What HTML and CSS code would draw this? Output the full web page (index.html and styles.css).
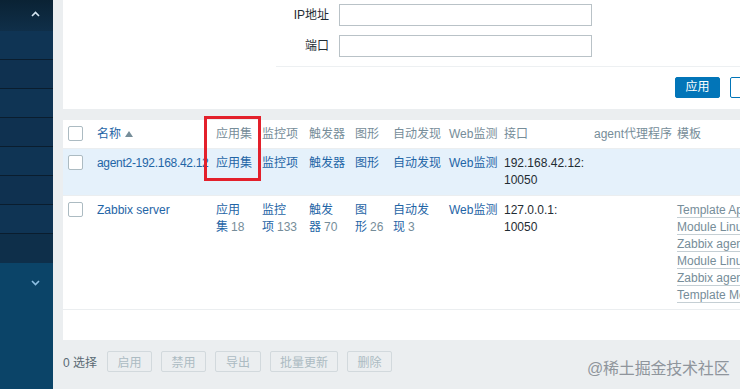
FILE: index.html
```html
<!DOCTYPE html>
<html lang="zh-CN">
<head>
<meta charset="utf-8">
<title>主机</title>
<link rel="stylesheet" href="styles.css">
</head>
<body>
<div class="app">
  <nav class="side">
    <div class="side-top">
      <svg class="chev" width="9" height="6" viewBox="0 0 9 6"><polyline points="1,5 4.5,1.5 8,5" fill="none" stroke="#d6e6f2" stroke-width="1.6"/></svg>
    </div>
    <div class="side-item"></div>
    <div class="side-item"></div>
    <div class="side-item"></div>
    <div class="side-item"></div>
    <div class="side-item"></div>
    <div class="side-item"></div>
    <div class="side-item"></div>
    <div class="side-item last"></div>
    <div class="side-bottom">
      <svg class="chev" width="9" height="6" viewBox="0 0 9 6"><polyline points="1,1 4.5,4.5 8,1" fill="none" stroke="#8fc0e4" stroke-width="1.6"/></svg>
    </div>
  </nav>
  <main class="main">
    <section class="filter">
      <div class="form">
        <label class="lbl">IP地址</label>
        <div class="inp"></div>
        <label class="lbl">端口</label>
        <div class="inp"></div>
      </div>
      <div class="form-foot">
        <button class="btn primary">应用</button>
        <button class="btn outline">重设</button>
      </div>
    </section>
    <section class="panel">
      <table class="list">
        <colgroup>
          <col style="width:29px"><col style="width:119px"><col style="width:46px"><col style="width:47px"><col style="width:46px"><col style="width:38px"><col style="width:56px"><col style="width:55px"><col style="width:90px"><col style="width:83px"><col style="width:220px">
        </colgroup>
        <thead>
          <tr>
            <th><span class="cb"></span></th>
            <th class="nw"><a class="sort">名称</a><span class="arrow"></span></th>
            <th>应用集</th>
            <th>监控项</th>
            <th>触发器</th>
            <th>图形</th>
            <th>自动发现</th>
            <th>Web监测</th>
            <th>接口</th>
            <th class="nw">agent代理程序</th>
            <th>模板</th>
          </tr>
        </thead>
        <tbody>
          <tr class="hl">
            <td><span class="cb"></span></td>
            <td class="nw"><a class="lnk host">agent2-192.168.42.12</a></td>
            <td><a class="lnk">应用集</a></td>
            <td><a class="lnk">监控项</a></td>
            <td><a class="lnk">触发器</a></td>
            <td><a class="lnk">图形</a></td>
            <td><a class="lnk">自动发现</a></td>
            <td class="nw"><a class="lnk">Web监测</a></td>
            <td class="dark">192.168.42.12:<br>10050</td>
            <td></td>
            <td></td>
          </tr>
          <tr>
            <td><span class="cb"></span></td>
            <td class="nw"><a class="lnk">Zabbix server</a></td>
            <td><a class="lnk">应用</a><span class="nw"><a class="lnk">集</a><span class="cnt">18</span></span></td>
            <td><a class="lnk">监控</a><span class="nw"><a class="lnk">项</a><span class="cnt">133</span></span></td>
            <td><a class="lnk">触发</a><span class="nw"><a class="lnk">器</a><span class="cnt">70</span></span></td>
            <td><a class="lnk">图</a><span class="nw"><a class="lnk">形</a><span class="cnt">26</span></span></td>
            <td><a class="lnk">自动发</a><span class="nw"><a class="lnk">现</a><span class="cnt">3</span></span></td>
            <td class="nw"><a class="lnk">Web监测</a></td>
            <td class="dark">127.0.0.1:<br>10050</td>
            <td></td>
            <td class="tpls">
              <a class="tpl">Template App Zabbix Server</a><br>
              <a class="tpl">Module Linux CPU by Zabbix agent</a><br>
              <a class="tpl">Zabbix agent</a><br>
              <a class="tpl">Module Linux generic by Zabbix agent</a><br>
              <a class="tpl">Zabbix agent</a><br>
              <a class="tpl">Template Module Linux filesystems</a>
            </td>
          </tr>
        </tbody>
      </table>
    </section>
    <div class="actions">
      <span class="sel">0 选择</span>
      <button class="abtn w45">启用</button>
      <button class="abtn w45">禁用</button>
      <button class="abtn w46">导出</button>
      <button class="abtn w68">批量更新</button>
      <button class="abtn w45">删除</button>
    </div>
  </main>
</div>
<div class="mark"></div>
<div class="watermark">@稀土掘金技术社区</div>
</body>
</html>
```

FILE: styles.css
```css
html, body {
  margin: 0;
  padding: 0;
  overflow: hidden;
  background: #ebeef0;
  font-family: "Liberation Sans", "Noto Sans CJK SC", sans-serif;
  font-size: 12px;
  color: #1f2c33;
}

.app {
  display: grid;
  grid-template-columns: 53px 960px;
  height: 389px;
}

/* sidebar */
.side {
  display: flex;
  flex-direction: column;
  background: #0b4468;
}
.side-top {
  height: 31px;
  background: linear-gradient(#0a2234, #0f2f49);
  display: flex;
  justify-content: flex-end;
  align-items: flex-start;
  padding: 11px 13px 0 0;
  box-sizing: border-box;
}
.side-item {
  height: 28px;
  background: #0f3454;
  border-bottom: 1px solid #0a1d2e;
}
.side-item:nth-child(3),
.side-item:nth-child(5),
.side-item:nth-child(7) {
  background: #0f3150;
}
.side-item.last {
  background: #0e2f4a;
  border-bottom: none;
  height: 29px;
}
.side-bottom {
  flex: 1;
  background: #0b4468;
  display: flex;
  justify-content: flex-end;
  align-items: flex-start;
  padding: 17px 13px 0 0;
}
.chev { display: block; }

/* main */
.main {
  padding-left: 10px;
  display: flex;
  flex-direction: column;
}

.filter {
  background: #fff;
  height: 109px;
}
.form {
  margin-left: 213px;
  padding-top: 4px;
  display: grid;
  grid-template-columns: 53px 253px;
  column-gap: 10px;
  row-gap: 9px;
}
.lbl {
  text-align: right;
  line-height: 22px;
  color: #1f2c33;
}
.inp {
  height: 22px;
  box-sizing: border-box;
  border: 1px solid #b9c2c7;
  background: #fff;
}
.form-foot {
  margin-left: 213px;
  margin-top: 9px;
  border-top: 1px solid #edf0f2;
  padding-top: 10px;
  display: flex;
  gap: 10px;
}
.btn {
  height: 21px;
  width: 45px;
  padding: 0;
  border-radius: 2px;
  font-family: inherit;
  font-size: 12px;
  line-height: 19px;
}
.btn.primary {
  margin-left: 399px;
  background: #0275b8;
  border: 1px solid #0275b8;
  color: #fff;
}
.btn.outline {
  background: #fff;
  border: 1px solid #0275b8;
  color: #0275b8;
}

/* table */
.panel {
  margin-top: 11px;
  height: 220px;
  background: #fff;
}
.list {
  border-collapse: collapse;
  table-layout: fixed;
  width: 829px;
}
.list th,
.list td {
  padding: 6px 0 5px 5px;
  line-height: 17px;
  text-align: left;
  vertical-align: top;
  border-bottom: 1px solid #ebeef0;
  font-weight: normal;
}
.list th {
  color: #768d99;
}
.nw { white-space: nowrap; }
.sort { color: #1f65a6; }
.arrow {
  display: inline-block;
  margin-left: 4px;
  width: 0;
  height: 0;
  border-left: 4px solid transparent;
  border-right: 4px solid transparent;
  border-bottom: 6px solid #768d99;
  vertical-align: 1px;
}
.list tr.hl td {
  background: #e5f1fb;
  padding-bottom: 6px;
}
.cb {
  display: block;
  width: 15px;
  height: 15px;
  box-sizing: border-box;
  border: 1px solid #acbbc2;
  border-radius: 2px;
  background: #fff;
}
.lnk { color: #1f65a6; }
.host { letter-spacing: -0.3px; }
.cnt {
  color: #768d99;
  margin-left: 3px;
}
.dark { color: #1f2c33; }
.tpls { white-space: nowrap; }
.tpl {
  color: #768d99;
  text-decoration: underline;
  text-decoration-color: #c5cfd4;
  text-underline-offset: 3px;
}

/* bottom actions */
.actions {
  display: flex;
  align-items: center;
  gap: 9px;
  padding-top: 11px;
}
.sel {
  color: #5a6a74;
  width: 35px;
}
.abtn {
  height: 21px;
  padding: 0;
  box-sizing: border-box;
  border: 1px solid #d2d9dd;
  border-radius: 2px;
  background: #ebeef0;
  color: #acbbc2;
  font-family: inherit;
  font-size: 12px;
}
.w45 { width: 45px; }
.w46 { width: 46px; }
.w68 { width: 68px; }

/* overlays */
.mark {
  position: absolute;
  left: 204px;
  top: 116px;
  width: 57px;
  height: 65px;
  box-sizing: border-box;
  border: 3px solid #e3202b;
}
.watermark {
  position: absolute;
  left: 587px;
  top: 359px;
  font-size: 16px;
  line-height: 20px;
  color: #8f959c;
  letter-spacing: -0.2px;
}
```
